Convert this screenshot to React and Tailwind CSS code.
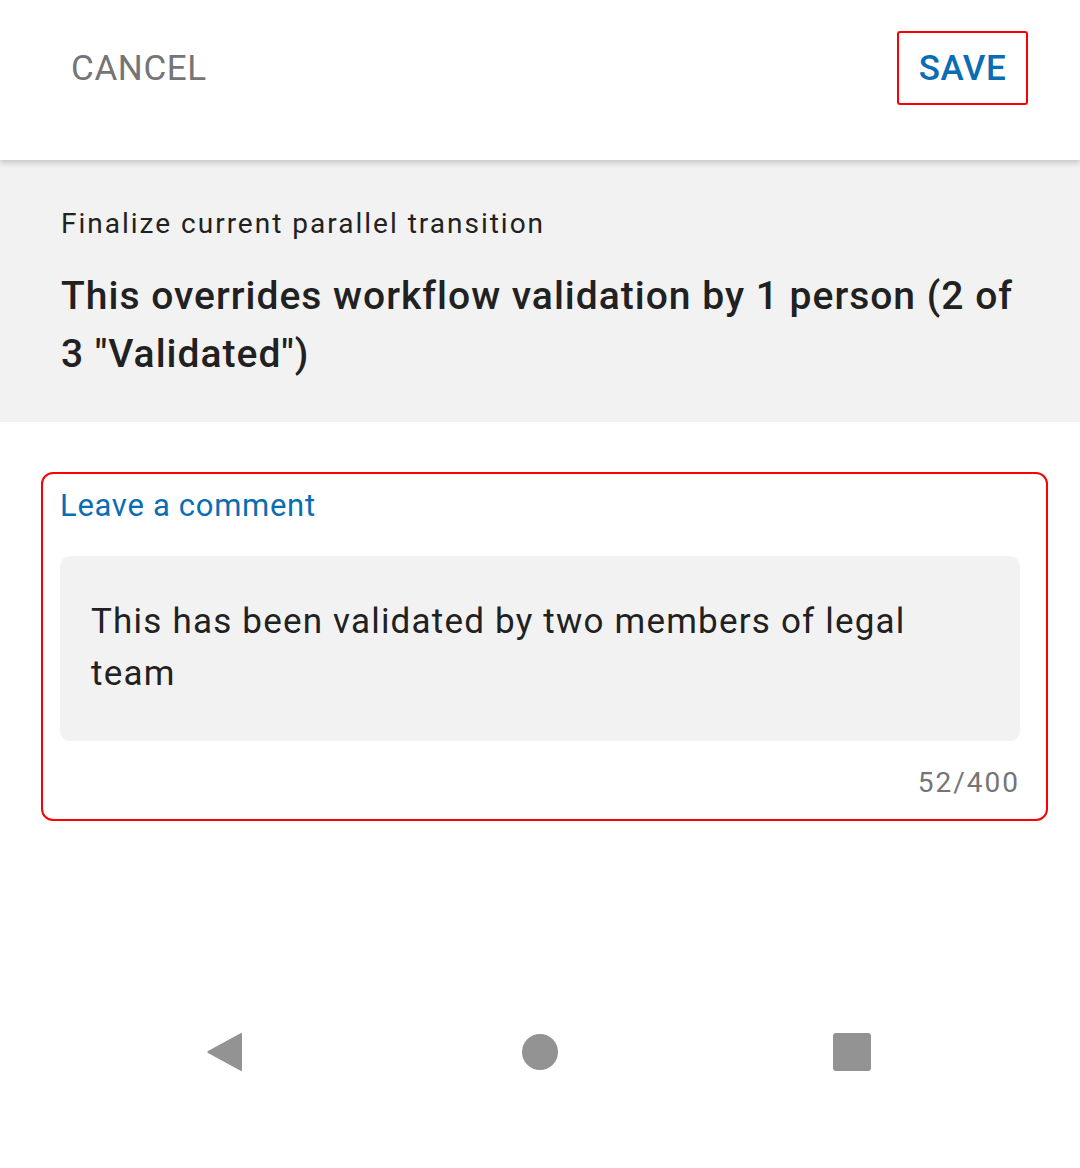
import React from "react";

export default function App() {
  return (
    <div className="w-[1080px] h-[1168px] bg-white flex flex-col font-['Roboto',sans-serif] text-[#212121]">
      {/* Header */}
      <div className="h-[160px] shrink-0 bg-white flex items-center justify-between pl-[71px] pr-[52px] shadow-[0_3px_6px_rgba(0,0,0,0.18)] relative z-10 pb-[24px]">
        <button className="text-[35px] tracking-[0.6px] text-[#757575] leading-none">CANCEL</button>
        <button className="h-[74px] w-[131px] border-2 border-[#ff0000] rounded-[3px] text-[35px] tracking-[0.6px] font-medium text-[#0a6db3] leading-none flex items-center justify-center">
          SAVE
        </button>
      </div>

      {/* Transition info */}
      <div className="h-[262px] shrink-0 bg-[#f2f2f2] px-[61px] pt-[44px]">
        <p className="text-[28px] leading-[40px] tracking-[2px]">Finalize current parallel transition</p>
        <h1 className="mt-[23px] text-[39px] leading-[58px] font-medium tracking-[1px]">
          This overrides workflow validation by 1 person (2 of 3 "Validated")
        </h1>
      </div>

      {/* Comment */}
      <div className="ml-[41px] mr-[32px] mt-[50px] border-2 border-[#ff0000] rounded-[12px] pl-[17px] pr-[26px] pt-[12px] pb-[16px]">
        <label className="block text-[31px] leading-[40px] tracking-[0.7px] text-[#0a6db3]">Leave a comment</label>
        <div className="mt-[30px] bg-[#f2f2f2] rounded-[10px] h-[185px] pl-[31px] pr-[60px] pt-[40px]">
          <p className="text-[35px] leading-[52px] tracking-[1.2px]">
            This has been validated by two members of legal team
          </p>
        </div>
        <p className="mt-[22px] text-right text-[28px] leading-[40px] tracking-[2px] text-[#757575]">52/400</p>
      </div>

      <div className="flex-1" />

      {/* Android nav bar */}
      <div className="h-[168px] shrink-0 flex items-start pt-[30px] pb-[98px]">
        <div className="flex items-center w-full h-[44px]">
          <div className="w-[450px] flex justify-center">
            <svg width="40" height="42" viewBox="0 0 40 42">
              <path d="M36 2 Q37 1.5 37 3 V39 Q37 40.5 36 40 L3 22 Q1.5 21 3 20 Z" fill="#939393" />
            </svg>
          </div>
          <div className="w-[180px] flex justify-center">
            <div className="w-[36px] h-[36px] rounded-full bg-[#939393]" />
          </div>
          <div className="w-[444px] flex justify-center">
            <div className="w-[38px] h-[38px] rounded-[3px] bg-[#939393]" />
          </div>
        </div>
      </div>
    </div>
  );
}
